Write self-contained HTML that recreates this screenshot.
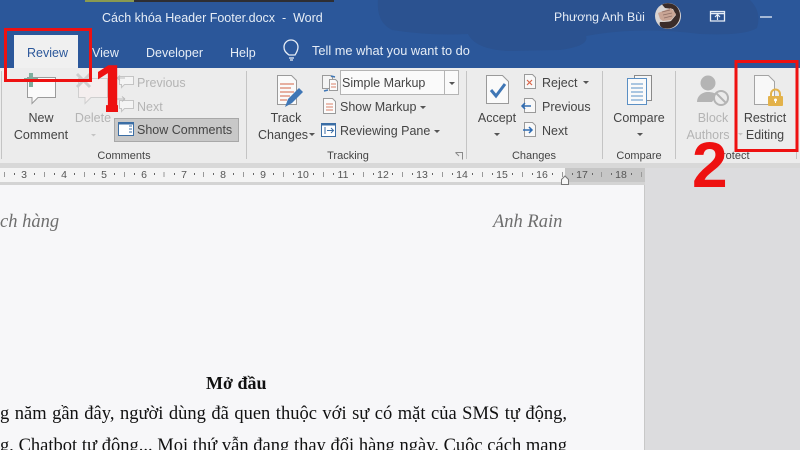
<!DOCTYPE html>
<html><head><meta charset="utf-8">
<style>
html,body{margin:0;padding:0;width:800px;height:450px;overflow:hidden;background:#dcdcde}
*{box-sizing:border-box}
#root{position:absolute;left:0;top:0;width:800px;height:450px;overflow:hidden;filter:blur(.3px)}
.t{position:absolute;font-family:"Liberation Sans",sans-serif;font-size:12.5px;color:#444;white-space:nowrap;line-height:16px}
.c{transform:translateX(-50%)}
.w{color:#e6edf6}
.g{color:#b4b4b4}
.s{position:absolute;top:71px;width:1px;height:88px;background:#c4c4c4}
.n{position:absolute;font-family:"Liberation Sans",sans-serif;font-size:10.5px;color:#555;top:168px;line-height:14px;transform:translateX(-50%)}
.p{position:absolute;font-family:"Liberation Serif",serif;color:#111;white-space:nowrap}
svg{position:absolute;left:0;top:0}
</style></head>
<body>
<div id="root">
<div style="position:absolute;left:0;top:0;width:800px;height:68px;background:#2b579a"></div>
<svg width="800" height="68" viewBox="0 0 800 68"><path d="M378 0Q376 22 392 30Q430 36 468 34Q476 50 510 51L560 50Q590 46 586 36Q640 26 700 34Q745 36 757 28Q762 12 750 0Z" fill="#2b5290"/></svg>
<div style="position:absolute;left:85px;top:0;width:49px;height:2px;background:#8a9a50"></div>
<div style="position:absolute;left:134px;top:0;width:200px;height:2px;background:#2e2e33"></div>
<div style="position:absolute;left:0;top:68px;width:800px;height:95px;background:#ececec"></div>
<div style="position:absolute;left:0;top:163px;width:800px;height:5px;background:#d8d8d8"></div>
<div style="position:absolute;left:14px;top:35px;width:64px;height:33px;background:#f0f0f0"></div>

<div class="t w" style="left:102px;top:10px">Cách khóa Header Footer.docx&nbsp; -&nbsp; Word</div>
<div class="t w" style="left:554px;top:9px;font-size:12.3px">Phương Anh Bùi</div>
<div class="t" style="left:27px;top:45px;color:#2b579a">Review</div>
<div class="t w" style="left:92px;top:45px">View</div>
<div class="t w" style="left:146px;top:45px">Developer</div>
<div class="t w" style="left:230px;top:45px">Help</div>
<div class="t w" style="left:312px;top:43px;font-size:12.8px">Tell me what you want to do</div>

<div class="t c" style="left:41px;top:110px">New</div>
<div class="t c" style="left:41px;top:127px">Comment</div>
<div class="t c g" style="left:93px;top:110px">Delete</div>
<div class="t g" style="left:137px;top:75px">Previous</div>
<div class="t g" style="left:137px;top:99px">Next</div>
<div style="position:absolute;left:114px;top:118px;width:125px;height:24px;background:#c8c8c8;border:1px solid #a8a8a8"></div>
<div class="t" style="left:137px;top:122px">Show Comments</div>
<div class="t c" style="left:124px;top:148px;font-size:11px">Comments</div>

<div class="t c" style="left:286px;top:110px">Track</div>
<div class="t" style="left:258px;top:127px">Changes</div>
<div style="position:absolute;left:340px;top:70px;width:119px;height:25px;background:#fafafa;border:1px solid #b4b4b4"></div>
<div style="position:absolute;left:444px;top:71px;width:1px;height:23px;background:#b4b4b4"></div>
<div class="t" style="left:342px;top:75px">Simple Markup</div>
<div class="t" style="left:340px;top:99px">Show Markup</div>
<div class="t" style="left:340px;top:123px">Reviewing Pane</div>
<div class="t c" style="left:348px;top:148px;font-size:11px">Tracking</div>

<div class="t c" style="left:497px;top:110px">Accept</div>
<div class="t" style="left:542px;top:75px">Reject</div>
<div class="t" style="left:542px;top:99px">Previous</div>
<div class="t" style="left:542px;top:123px">Next</div>
<div class="t c" style="left:534px;top:148px;font-size:11px">Changes</div>

<div class="t c" style="left:639px;top:110px">Compare</div>
<div class="t c" style="left:639px;top:148px;font-size:11px">Compare</div>
<div class="t c g" style="left:713px;top:110px">Block</div>
<div class="t c g" style="left:708px;top:127px">Authors</div>
<div class="t" style="left:722px;top:148px;font-size:11px">rotect</div>
<div class="t c" style="left:765px;top:110px">Restrict</div>
<div class="t c" style="left:765px;top:127px">Editing</div>

<div class="s" style="left:1px"></div><div class="s" style="left:246px"></div><div class="s" style="left:466px"></div><div class="s" style="left:602px"></div><div class="s" style="left:675px"></div><div class="s" style="left:796px"></div>

<!-- ruler -->
<div style="position:absolute;left:0;top:168px;width:645px;height:14px;background:#f4f4f4"></div>
<div style="position:absolute;left:565px;top:168px;width:80px;height:14px;background:#c6c6c6"></div>
<div style="position:absolute;left:0;top:182px;width:645px;height:3px;background:#d4d4d4"></div>
<span class="n" style="left:24px">3</span><span class="n" style="left:64px">4</span><span class="n" style="left:104px">5</span><span class="n" style="left:144px">6</span><span class="n" style="left:184px">7</span><span class="n" style="left:223px">8</span><span class="n" style="left:263px">9</span><span class="n" style="left:303px">10</span><span class="n" style="left:343px">11</span><span class="n" style="left:383px">12</span><span class="n" style="left:422px">13</span><span class="n" style="left:462px">14</span><span class="n" style="left:502px">15</span><span class="n" style="left:542px">16</span><span class="n" style="left:582px">17</span><span class="n" style="left:621px">18</span>

<!-- page -->
<div style="position:absolute;left:0;top:185px;width:645px;height:265px;background:#f7f7f9;border-right:1px solid #c8c8c8"></div>
<div class="p" style="left:0;top:212px;font-size:18.5px;font-style:italic;color:#6e6e6e;line-height:20px">ch hàng</div>
<div class="p" style="left:493px;top:212px;font-size:18.5px;font-style:italic;color:#6e6e6e;line-height:20px">Anh Rain</div>
<div class="p" style="left:206px;top:373px;font-size:18px;font-weight:bold;line-height:20px">Mở đầu</div>
<div class="p" style="left:0;top:404px;font-size:18.5px;line-height:20px;width:567px;text-align-last:justify;white-space:normal;height:20px;overflow:hidden">g năm gần đây, người dùng đã quen thuộc với sự có mặt của SMS tự động,</div>
<div class="p" style="left:0;top:436px;font-size:18.5px;line-height:20px;width:567px;text-align-last:justify;white-space:normal;height:14px;overflow:hidden">g, Chatbot tự động... Mọi thứ vẫn đang thay đổi hàng ngày. Cuộc cách mạng</div>

<svg width="800" height="450" viewBox="0 0 800 450">
<defs><clipPath id="one"><path d="M98 60H118V114H106V85H98Z"/></clipPath></defs>
<!-- bulb -->
<path d="M288 55c-4-3-5-5-5-8a7 7 0 0 1 14 0c0 3-1 5-3 8z" fill="none" stroke="#e6edf6" stroke-width="1.3" transform="translate(1 0)"/>
<path d="M289 58h5M290 60h3" stroke="#e6edf6" stroke-width="1.2"/>
<!-- present icon -->
<path d="M710.500 11.500h14v9.500h-14z" fill="none" stroke="#e6edf6" stroke-width="1.300"/><path d="M710 13.500h15" stroke="#e6edf6" stroke-width="1.500"/><path d="M717.500 20v-5M715 17l2.500-2.500 2.500 2.500" fill="none" stroke="#e6edf6" stroke-width="1.200"/>
<path d="M760 17h12" stroke="#e6edf6" stroke-width="1.300"/>
<!-- avatar -->
<circle cx="668" cy="16" r="13" fill="#d9d4d2"/><path d="M662 4.500a13 13 0 0 1 14 1.500c6 6 5 15-1 20-4 3-8 3-12 2-3-1-4-4-3-6 3 0 8 0 11-1l5-6-3-6-8-1z" fill="#3a2c2a"/><path d="M658 13l13-5 5 6-5 6-8 1-3-2z" fill="#c9a595"/><path d="M662 12l8-2M663 15l9-2M664 18l8-2" stroke="#8f6f66" stroke-width=".8"/>
<!-- new comment -->
<path d="M27.500 77.500h28v20H38l-6 6v-6h-4.500z" fill="#fafafa" stroke="#9a9a9a"/><path d="M24 80h14M31 73v14" stroke="#7fae9e" stroke-width="4"/>
<!-- delete -->
<path d="M78.500 78.500h29v19H91l-6 6v-6h-6.500z" fill="#f4eeee" stroke="#cfcfcf"/><path d="M77 74l13 13M90 74L77 87" stroke="#cdcdcd" stroke-width="3"/>
<path d="M91 134l2.500 2.500 2.500-2.500z" fill="#c4c4c4"/>
<!-- previous next -->
<path d="M119.500 76.500h14v8h-9l-3 3v-3h-2z" fill="#f4f4f4" stroke="#c4c4c4"/><path d="M117 78h8M117 78l3-2.500M117 78l3 2.500" stroke="#bbb"/>
<path d="M119.500 100.500h14v8h-9l-3 3v-3h-2z" fill="#f4f4f4" stroke="#c4c4c4"/><path d="M117 99h8M125 99l-3-2.500M125 99l-3 2.500" stroke="#bbb"/>
<!-- show comments -->
<path d="M118.500 122.500h15v13h-15z" fill="#fff" stroke="#3b6ea5"/><path d="M118 123.500h16" stroke="#3b6ea5" stroke-width="2"/><path d="M129 126h3M129 129h3M129 132h3" stroke="#3b6ea5"/>
<!-- track changes -->
<path d="M277.500 75.500h14l5 5v24h-19z" fill="#fafafa" stroke="#9a9a9a"/><path d="M280 84h14M280 88h11M280 92h14M280 96h10M280 100h7" stroke="#d9826a" stroke-width="1.300"/>
<path d="M285 107l3-8 11-11 4 4-11 11z" fill="#3f76b5"/>
<!-- tracking small icons -->
<path d="M322.500 75.500h8l2 2v11h-10z" fill="#f4f4f4" stroke="#9a9a9a"/><path d="M329.500 79.500h6l2 2v9h-8z" fill="#fbfbfb" stroke="#9a9a9a"/><path d="M331 84h5M331 87h5" stroke="#d9826a"/><path d="M324 91l4-1M331 76l4 1" stroke="#3f76b5" stroke-width="1.500"/>
<path d="M323.500 98.500h9l3 3v12h-12z" fill="#fbfbfb" stroke="#9a9a9a"/><path d="M326 104h7M326 107h7M326 110h7" stroke="#d9826a"/>
<path d="M321.500 123.500h14v13h-14z" fill="#fff" stroke="#3b6ea5"/><path d="M321 124.500h15" stroke="#3b6ea5" stroke-width="2"/><path d="M325 127v7M327 130.500h6M331 128l2.500 2.500-2.500 2.500" fill="none" stroke="#3b6ea5"/>
<!-- dropdown carets -->
<path d="M449 82l3 3 3-3zM420 106l3 3 3-3zM434 130l3 3 3-3zM309 133l3 3 3-3zM494 133l3 3 3-3zM583 81l3 3 3-3zM637 133l3 3 3-3z" fill="#555"/>
<path d="M738 133l2.500 2.500 2.500-2.500z" fill="#c4c4c4"/>
<path d="M455.500 152.500h7v7M459 156l-3.500-3.500" fill="none" stroke="#8a8a8a"/>
<!-- accept -->
<path d="M486.500 75.500h16l6 6v22h-22z" fill="#fafafa" stroke="#9a9a9a"/><path d="M491 90l5 6 9-12" fill="none" stroke="#3f76b5" stroke-width="3"/>
<!-- reject prev next -->
<path d="M524.500 74.500h8l3 3v11h-11z" fill="#f8f8f8" stroke="#9a9a9a"/><path d="M527 80l5 5M532 80l-5 5" stroke="#d9654a" stroke-width="1.200"/>
<path d="M524.500 98.500h8l3 3v11h-11z" fill="#f8f8f8" stroke="#9a9a9a"/><path d="M522 106h9M525 103l-3 3 3 3" fill="none" stroke="#2f6cb3" stroke-width="1.500"/>
<path d="M524.500 122.500h8l3 3v11h-11z" fill="#f8f8f8" stroke="#9a9a9a"/><path d="M523 130h9M529 127l3 3-3 3" fill="none" stroke="#2f6cb3" stroke-width="1.500"/>
<!-- compare -->
<path d="M634.500 75.500h17v25h-17z" fill="#f6f6f6" stroke="#8a8a8a"/><path d="M627.500 78.500h19v26h-19z" fill="#fafafa" stroke="#5a8fc4"/><path d="M631 84h12M631 88h12M631 92h12M631 96h12M631 100h12" stroke="#7aa6d2" stroke-width="1.200"/>
<!-- block authors -->
<circle cx="708" cy="83" r="7.500" fill="#b4b4b4"/><path d="M697 102c0-6 5-10 11-10 4 0 7 1 9 3l-5 7z" fill="#b4b4b4"/><circle cx="721" cy="98" r="7" fill="#ececec" stroke="#b4b4b4" stroke-width="2"/><path d="M716 93l10 10" stroke="#b4b4b4" stroke-width="2"/>
<!-- restrict -->
<path d="M754.500 75.500h14l6 6v23h-20z" fill="#f8f8f8" stroke="#a4a4a4"/>
<path d="M771 97v-3a4.500 4.500 0 0 1 9 0v3" fill="none" stroke="#e3b24a" stroke-width="2"/><rect x="768" y="96" width="15" height="10" rx="1" fill="#e3b24a"/><circle cx="775.500" cy="100" r="1.500" fill="#fff"/><path d="M775.500 100v3" stroke="#fff"/>
<!-- ruler ticks -->
<path d="M4.500 172v5M44.500 172v5M84.500 172v5M124.500 172v5M164 172v5M203.500 172v5M243.500 172v5M283.500 172v5M323.500 172v5M363.500 172v5M402.500 172v5M442.500 172v5M482.500 172v5M522.500 172v5M562.500 172v5M601.500 172v5M641.500 172v5" stroke="#999"/>
<path d="M14 174h1M34 174h1M54 174h1M74 174h1M94 174h1M114 174h1M134 174h1M154 174h1M174 174h1M194 174h1M213 174h1M233 174h1M253 174h1M273 174h1M293 174h1M313 174h1M333 174h1M353 174h1M373 174h1M392 174h1M412 174h1M432 174h1M452 174h1M472 174h1M492 174h1M512 174h1M532 174h1M552 174h1M572 174h1M592 174h1M611 174h1M631 174h1" stroke="#666" stroke-width="2"/>
<path d="M561.500 184.500v-5l3.500-3.500 3.500 3.500v5z" fill="#f7f7f7" stroke="#777"/>
<!-- red annotations -->
<rect x="5.500" y="29.500" width="85" height="51" fill="none" stroke="#ee1111" stroke-width="3"/>
<rect x="736" y="61.500" width="61" height="89" fill="none" stroke="#ee1111" stroke-width="3"/>
<g clip-path="url(#one)"><text x="92" y="112" font-family="Liberation Sans,sans-serif" font-weight="bold" font-size="68" fill="#ee1111">1</text></g>
<text x="692" y="187" font-family="Liberation Sans,sans-serif" font-weight="bold" font-size="64" fill="#ee1111">2</text>
</svg>
</div>
</body></html>
